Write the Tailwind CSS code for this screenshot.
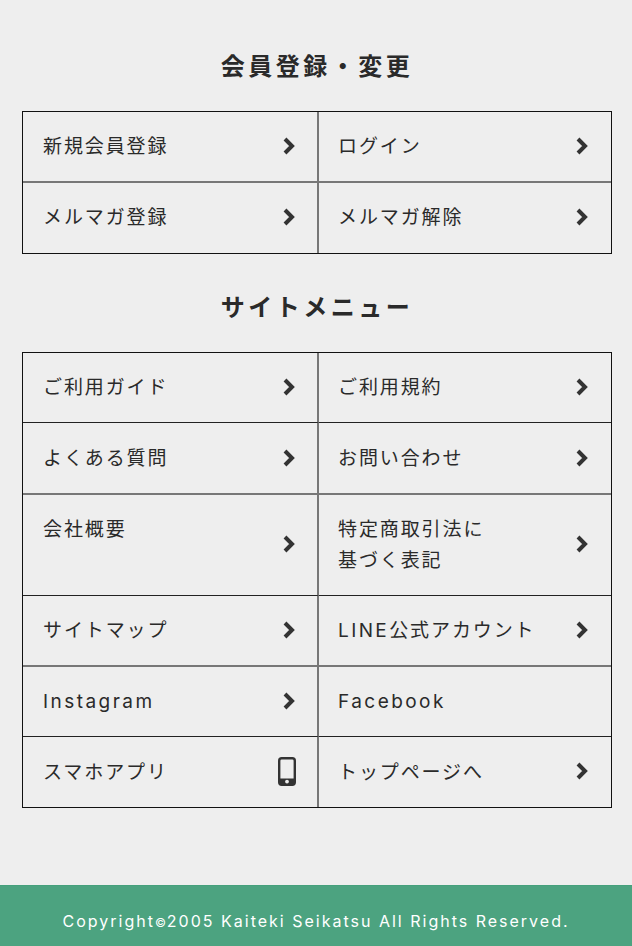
<!DOCTYPE html>
<html lang="ja">
  <head>
    <meta charset="UTF-8" />
    <title>サイトメニュー</title>
    <script src="https://cdn.jsdelivr.net/npm/@tailwindcss/browser@4"></script>
  </head>
  <body class="bg-[#eeeeee] h-[946px] overflow-hidden flex flex-col text-[#2a2a2a] font-['Inter','Noto_Sans_CJK_JP',sans-serif]">
    <main class="flex-1 pl-[22px] pr-[20px] pt-[49px]">
      <h2 class="text-center text-[24px] leading-[36px] tracking-[3.5px] font-bold">会員登録・変更</h2>
      <section class="mt-[26px] border border-[#111] grid grid-cols-[296px_1fr] text-[19px] tracking-[1.9px]">
        <a class="h-[71px] pt-[2px] pl-5 pr-[21px] flex items-center justify-between border-r-2 border-b-2 border-[#777]">新規会員登録
          <svg class="-mt-[4px] w-[14px] h-[20px]" viewBox="0 0 14 20"><path d="M3 3 10 10 3 17" fill="none" stroke="#333" stroke-width="4"/></svg>
        </a>
        <a class="h-[71px] pt-[2px] pl-[19px] pr-[22px] flex items-center justify-between border-b-2 border-[#777]">ログイン
          <svg class="-mt-[4px] w-[14px] h-[20px]" viewBox="0 0 14 20"><path d="M3 3 10 10 3 17" fill="none" stroke="#333" stroke-width="4"/></svg>
        </a>
        <a class="h-[70px] pl-5 pr-[21px] flex items-center justify-between border-r-2 border-[#777]">メルマガ登録
          <svg class="-mt-[2px] w-[14px] h-[20px]" viewBox="0 0 14 20"><path d="M3 3 10 10 3 17" fill="none" stroke="#333" stroke-width="4"/></svg>
        </a>
        <a class="h-[70px] pl-[19px] pr-[22px] flex items-center justify-between">メルマガ解除
          <svg class="-mt-[2px] w-[14px] h-[20px]" viewBox="0 0 14 20"><path d="M3 3 10 10 3 17" fill="none" stroke="#333" stroke-width="4"/></svg>
        </a>
      </section>

      <h2 class="mt-[36px] text-center text-[24px] leading-[36px] tracking-[3.5px] font-bold">サイトメニュー</h2>
      <section class="mt-[26px] border border-[#111] grid grid-cols-[296px_1fr] text-[19px] tracking-[1.9px]">
        <a class="h-[70px] pt-[2px] pl-5 pr-[21px] flex items-center justify-between border-r-2 border-r-[#777] border-b border-b-[#222]">ご利用ガイド
          <svg class="-mt-[4px] w-[14px] h-[20px]" viewBox="0 0 14 20"><path d="M3 3 10 10 3 17" fill="none" stroke="#333" stroke-width="4"/></svg>
        </a>
        <a class="h-[70px] pt-[2px] pl-[19px] pr-[22px] flex items-center justify-between border-b border-b-[#222]">ご利用規約
          <svg class="-mt-[4px] w-[14px] h-[20px]" viewBox="0 0 14 20"><path d="M3 3 10 10 3 17" fill="none" stroke="#333" stroke-width="4"/></svg>
        </a>
        <a class="h-[72px] pt-[2px] pl-5 pr-[21px] flex items-center justify-between border-r-2 border-b-2 border-[#777]">よくある質問
          <svg class="-mt-[2px] w-[14px] h-[20px]" viewBox="0 0 14 20"><path d="M3 3 10 10 3 17" fill="none" stroke="#333" stroke-width="4"/></svg>
        </a>
        <a class="h-[72px] pt-[2px] pl-[19px] pr-[22px] flex items-center justify-between border-b-2 border-[#777]">お問い合わせ
          <svg class="-mt-[2px] w-[14px] h-[20px]" viewBox="0 0 14 20"><path d="M3 3 10 10 3 17" fill="none" stroke="#333" stroke-width="4"/></svg>
        </a>
        <a class="h-[101px] pl-5 pr-[21px] flex items-center justify-between border-r-2 border-r-[#777] border-b border-b-[#222]">
          <span class="self-start pt-[19px] leading-[31px]">会社概要</span>
          <svg class="-mt-[2px] w-[14px] h-[20px]" viewBox="0 0 14 20"><path d="M3 3 10 10 3 17" fill="none" stroke="#333" stroke-width="4"/></svg>
        </a>
        <a class="h-[101px] pl-[19px] pr-[22px] flex items-center justify-between border-b border-b-[#222]">
          <span class="leading-[31px]">特定商取引法に<br />基づく表記</span>
          <svg class="-mt-[2px] w-[14px] h-[20px]" viewBox="0 0 14 20"><path d="M3 3 10 10 3 17" fill="none" stroke="#333" stroke-width="4"/></svg>
        </a>
        <a class="h-[71px] pt-[2px] pl-5 pr-[21px] flex items-center justify-between border-r-2 border-b-2 border-[#777]">サイトマップ
          <svg class="-mt-[4px] w-[14px] h-[20px]" viewBox="0 0 14 20"><path d="M3 3 10 10 3 17" fill="none" stroke="#333" stroke-width="4"/></svg>
        </a>
        <a class="h-[71px] pt-[2px] pl-[19px] pr-[22px] flex items-center justify-between border-b-2 border-[#777]">
          <span><span class="tracking-[2.4px]">LINE</span>公式アカウント</span>
          <svg class="-mt-[4px] w-[14px] h-[20px]" viewBox="0 0 14 20"><path d="M3 3 10 10 3 17" fill="none" stroke="#333" stroke-width="4"/></svg>
        </a>
        <a class="h-[70px] pt-[2px] pl-5 pr-[21px] flex items-center justify-between border-r-2 border-r-[#777] border-b border-b-[#222] tracking-[2.45px]">Instagram
          <svg class="-mt-[4px] w-[14px] h-[20px]" viewBox="0 0 14 20"><path d="M3 3 10 10 3 17" fill="none" stroke="#333" stroke-width="4"/></svg>
        </a>
        <a class="h-[70px] pt-[2px] pl-[19px] pr-[22px] flex items-center justify-between border-b border-b-[#222] tracking-[2.45px]">Facebook</a>
        <a class="h-[70px] pt-[2px] pl-5 pr-[21px] flex items-center justify-between border-r-2 border-[#777]">スマホアプリ
          <svg class="-mt-[4px] w-[18px] h-[29px]" viewBox="0 0 18 29"><rect x="1.2" y="1.2" width="15.6" height="26.6" rx="2.5" fill="none" stroke="#333" stroke-width="2.4"/><rect x="1.2" y="21.5" width="15.6" height="6.3" fill="#333"/><circle cx="9" cy="24.6" r="1.9" fill="#eee"/></svg>
        </a>
        <a class="h-[70px] pt-[2px] pl-[19px] pr-[22px] flex items-center justify-between">トップページへ
          <svg class="-mt-[4px] w-[14px] h-[20px]" viewBox="0 0 14 20"><path d="M3 3 10 10 3 17" fill="none" stroke="#333" stroke-width="4"/></svg>
        </a>
      </section>
    </main>
    <footer class="h-[61px] bg-[#4ca380] border-t border-[#45a07c] flex items-center justify-center pt-[10px] text-white text-[16px] tracking-[2px]">
      <span>Copyright<span class="text-[12px] tracking-[1px]">©</span>2005 Kaiteki Seikatsu All Rights Reserved.</span>
    </footer>
  </body>
</html>
